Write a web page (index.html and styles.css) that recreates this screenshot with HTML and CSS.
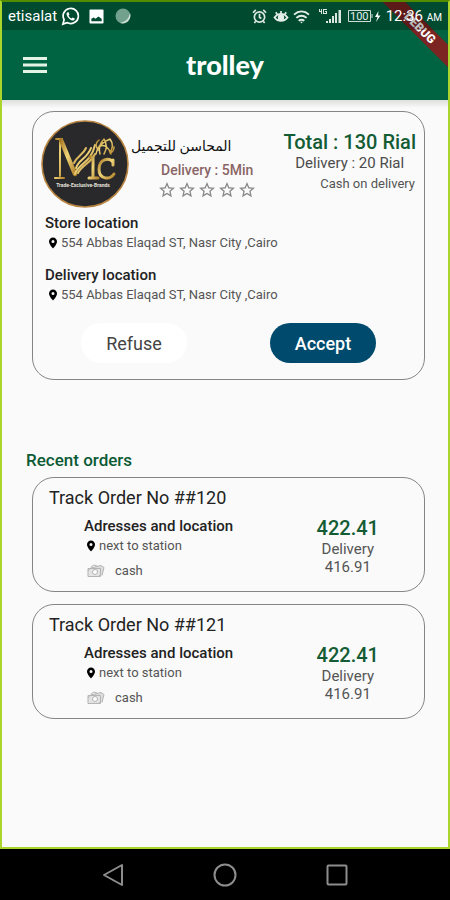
FILE: index.html
```html
<!DOCTYPE html>
<html lang="en">
<head>
<meta charset="utf-8">
<meta name="viewport" content="width=device-width, initial-scale=1">
<title>trolley</title>
<link rel="stylesheet" href="styles.css">
</head>
<body>
<svg class="sprite" aria-hidden="true">
  <symbol id="pin" viewBox="0 0 24 24"><path d="M12 1C7.500 1 4 4.500 4 9c0 6 8 14 8 14s8-8 8-14c0-4.500-3.500-8-8-8zm0 11a3 3 0 1 1 0-6 3 3 0 0 1 0 6z"/></symbol>
  <symbol id="star" viewBox="2 2 20 20"><path d="M22 9.240l-7.190-.62L12 2 9.190 8.630 2 9.240l5.460 4.730L5.820 21 12 17.270 18.180 21l-1.630-7.030L22 9.240zM12 15.400l-3.760 2.270 1-4.280-3.320-2.880 4.380-.38L12 6.100l1.710 4.040 4.380.38-3.320 2.880 1 4.280L12 15.400z"/></symbol>
  <symbol id="cash" viewBox="0 0 18 14"><g fill="none" stroke="#b4b4b4"><path fill="#ddd" d="M3.500 4L14 1.500l3 2-2 8"/><path fill="#e4e4e4" d="M1 4.500h12.500v8H1z"/><circle cx="8" cy="8" r="2.500" fill="#fff"/><path d="M1 7l2-2.500M11.500 12.500l2-2M4 3l3-2 3 1"/></g></symbol>
</svg>
<div class="app">
  <header class="top">
    <div class="status">
      <span class="carrier">etisalat</span>
      <svg class="whatsapp" viewBox="0 0 20 20"><path d="M2 18l1.300-4.600a8 8 0 1 1 3 3z" fill="none" stroke="#fff" stroke-width="1.800"/><path d="M7 5.500c-1.500.5-1.500 2.500-.3 4.500 1.500 2.500 4 4.500 6 4.200 1.500-.2 2-1.500 1.700-2.200l-2.200-1-1.200 1.200C9.500 11.500 8.500 10.500 8 9l.9-1.200L8 5.500z" fill="#fff"/></svg>
      <svg class="image-icon" viewBox="0 0 16 16"><rect x=".5" y=".5" width="15" height="15" rx="1" fill="#fff"/><path d="M2.500 13v-2.500L5 9l2 1.500L10 8l3.500 2.500V13z" fill="#004a31"/></svg>
      <svg class="ball" viewBox="0 0 16 16"><circle cx="8" cy="8" r="7.500" fill="#72a18d"/><path d="M15 5a8 8 0 0 1-10 10c5-1 9-4 10-10z" fill="#d3e0da"/></svg>
      <div class="system">
        <svg class="alarm" viewBox="0 0 16 16" fill="none" stroke="#dbe8e2" stroke-width="1.800"><circle cx="8" cy="8.500" r="5.500"/><path d="M8 5v4l2 1M1 4l3-3M15 4l-3-3M4 13l-1.500 2M12 13l1.500 2"/></svg>
        <svg class="eye" viewBox="0 0 16 16" fill="none" stroke="#e4eee9" stroke-width="1.800"><path d="M1 9c4-5 10-5 14 0-4 5-10 5-14 0zM8 5V2M4 6L2.500 3.500M12 6l1.500-2.500"/><circle cx="8" cy="9" r="2.500" fill="#e4eee9"/></svg>
        <svg class="wifi" viewBox="0 0 18 16" fill="none" stroke="#e4eee9" stroke-width="2"><path d="M1 6c5-4.500 11-4.500 16 0M3.500 9.500c3.500-3 7.500-3 11 0M6 12.500c2-1.500 4-1.500 6 0"/><path d="M7.500 13.500h3L9 15.500z" fill="#e4eee9" stroke="none"/></svg>
        <svg class="signal" viewBox="0 0 24 16" fill="#dbe8e2"><path d="M1 1h1v2h1V1h1v5H3V4H1zM5 1h4v1H6v3h2V4H7V3h2v3H5zM8 13h2v2H8zM11 11h2v4h-2zM14 8h2v7h-2zM17 5h2v10h-2zM20.500 2h2.500v13h-2.500z"/></svg>
        <svg class="battery" viewBox="0 0 34 16"><path d="M.5 2.500h22v11H.5zM24 6v4" fill="none" stroke="#cfdfd8"/><text x="2" y="12" class="charge">100</text><path d="M30.500 3L27 9h2.500L28 14l4.500-6.500H30z" fill="#fff"/></svg>
        <span class="time">12:36 <small>AM</small></span>
      </div>
    </div>
    <div class="bar">
      <button class="menu" aria-label="Menu"><svg viewBox="0 0 24 16" fill="#e3f3e6"><rect width="24" height="3"/><rect y="6.500" width="24" height="3"/><rect y="13" width="24" height="3"/></svg></button>
      <h1 class="brand">trolley</h1>
    </div>
    <div class="ribbon"><span>DEBUG</span></div>
  </header>
  <main class="content">
    <section class="card request">
      <div class="summary">
        <svg class="logo" viewBox="0 0 88 88" role="img" aria-label="Trade Exclusive Brands">
          <defs><linearGradient id="gold" x1="0" y1="0" x2="1" y2="1"><stop offset="0" stop-color="#a97a25"/><stop offset=".45" stop-color="#f0d478"/><stop offset="1" stop-color="#b4842d"/></linearGradient></defs>
          <circle cx="44" cy="44" r="43" fill="#29292b" stroke="#b98542" stroke-width="1.600"/>
          <g fill="none" stroke="url(#gold)" stroke-linecap="round" stroke-linejoin="round">
            <path d="M15 19h6M19 19v37M14 58h9" stroke-width="2"/>
            <path d="M20 20l14 34" stroke-width="4.500"/>
            <path d="M34 54C38 43 50 43 54 25M35 48c3-9 11-9 15-20M33 43c3-7 9-8 12-15M37 53c4-8 13-10 17-19" stroke-width="2"/>
            <path d="M52 38v18M48 58h9M49 37h3" stroke-width="3"/>
            <path d="M72 42c-4-5-14-3-14 7 0 11 11 11 15 5M72 40v5" stroke-width="3"/>
            <path d="M55 34c1-6 6-12 14-15 3 4 3 9 0 14 3-1 4-3 4-6M59 34c-2-7 1-12 4-15 3 5 3 10 0 15M59 26c5-2 9 2 11 8M57 30c-3-4-2-8 1-10" stroke-width="1.500"/>
          </g>
          <text x="42" y="67" class="tagline">Trade-Exclusive-Brands</text>
        </svg>
        <div class="store">
          <p class="name" lang="ar" dir="rtl">المحاسن للتجميل</p>
          <p class="eta">Delivery : 5Min</p>
          <div class="stars" role="img" aria-label="0 of 5 stars">
            <svg><use href="#star"/></svg><svg><use href="#star"/></svg><svg><use href="#star"/></svg><svg><use href="#star"/></svg><svg><use href="#star"/></svg>
          </div>
        </div>
        <div class="price">
          <p class="total">Total : 130 Rial</p>
          <p class="fee">Delivery : 20 Rial</p>
          <p class="method">Cash on delivery</p>
        </div>
      </div>
      <div class="place">
        <h2>Store location</h2>
        <p><svg class="pin"><use href="#pin"/></svg>554 Abbas Elaqad ST, Nasr City ,Cairo</p>
      </div>
      <div class="place">
        <h2>Delivery location</h2>
        <p><svg class="pin"><use href="#pin"/></svg>554 Abbas Elaqad ST, Nasr City ,Cairo</p>
      </div>
      <div class="actions">
        <button class="pill refuse">Refuse</button>
        <button class="pill accept">Accept</button>
      </div>
    </section>
    <h2 class="heading">Recent orders</h2>
    <article class="card order">
      <h3>Track Order No ##120</h3>
      <div class="details">
        <div class="where">
          <h4>Adresses and location</h4>
          <p class="address"><svg class="pin"><use href="#pin"/></svg>next to station</p>
          <p class="payment"><svg class="cash"><use href="#cash"/></svg>cash</p>
        </div>
        <div class="amounts"><strong>422.41</strong><span>Delivery</span><span>416.91</span></div>
      </div>
    </article>
    <article class="card order">
      <h3>Track Order No ##121</h3>
      <div class="details">
        <div class="where">
          <h4>Adresses and location</h4>
          <p class="address"><svg class="pin"><use href="#pin"/></svg>next to station</p>
          <p class="payment"><svg class="cash"><use href="#cash"/></svg>cash</p>
        </div>
        <div class="amounts"><strong>422.41</strong><span>Delivery</span><span>416.91</span></div>
      </div>
    </article>
  </main>
</div>
<nav class="keys">
  <button aria-label="Back"><svg viewBox="0 0 24 24"><path d="M21 2v20L3 12z"/></svg></button>
  <button aria-label="Home"><svg viewBox="0 0 24 24"><circle cx="12" cy="12" r="10.500"/></svg></button>
  <button aria-label="Recent apps"><svg viewBox="0 0 24 24"><rect x="2.500" y="2.500" width="19" height="19" rx="1"/></svg></button>
</nav>
</body>
</html>
```
FILE: styles.css
```css
* { box-sizing: border-box; }
body {
  margin: 0;
  min-height: 100vh;
  display: flex;
  flex-direction: column;
  background: #fafafa;
  color: #222;
  font-family: Roboto, "DejaVu Sans", sans-serif;
}
h1, h2, h3, h4, p { margin: 0; font-weight: 500; }
button { border: 0; padding: 0; background: none; font: inherit; }
svg { display: block; flex: none; }
.sprite { position: absolute; width: 0; height: 0; }

.app {
  flex: 1;
  border: 2px solid #a9d52c;
  border-top-color: #548c00;
}
.top {
  position: relative;
  overflow: hidden;
  background: #006442;
  color: #fff;
}
.status {
  position: relative;
  z-index: 1;
  display: flex;
  align-items: center;
  height: 28px;
  padding: 0 6px;
  background: rgba(0, 0, 0, 0.26);
}
.carrier { font-size: 15px; }
.whatsapp { width: 19px; height: 19px; margin-left: 4px; }
.image-icon { width: 15px; height: 15px; margin-left: 9px; }
.ball { width: 16px; height: 16px; margin-left: 11px; }
.system { display: flex; align-items: center; margin-left: auto; }
.alarm { width: 15px; height: 15px; margin-right: 6px; }
.eye { width: 16px; height: 15px; margin-right: 4px; }
.wifi { width: 17px; height: 15px; margin-right: 8px; }
.signal { width: 24px; height: 16px; margin-right: 6px; }
.battery { width: 34px; height: 16px; margin-right: 4px; }
.charge { font-size: 11px; fill: #e4eee9; }
.time { font-size: 15px; white-space: nowrap; }
.time small { font-size: 10px; }
.bar {
  display: grid;
  grid-template-columns: 43px 1fr 64px;
  align-items: center;
  height: 70px;
  padding-left: 21px;
}
.menu svg { width: 24px; height: 16px; }
.brand {
  text-align: center;
  font-family: Lato, sans-serif;
  font-size: 27px;
  line-height: 32px;
  font-weight: 900;
}
.ribbon {
  position: absolute;
  top: 18px;
  right: -42px;
  width: 140px;
  transform: rotate(45deg);
  background: #7c2421;
  text-align: center;
  font-size: 12px;
  line-height: 16px;
  font-weight: 900;
}

.content {
  padding: 11px 23px 24px 30px;
  background: linear-gradient(#dededc, #fafafa 8px);
}
.card { border: 1px solid #858585; border-radius: 22px; }
.request { padding: 8px 8px 16px; }
.summary { display: flex; height: 93px; }
.logo { width: 88px; height: 88px; }
.tagline { font: 700 5px Roboto, sans-serif; fill: #e5e2db; text-anchor: middle; }
.store { margin-left: 2px; padding-top: 14px; }
.name { font-size: 14px; line-height: 24px; text-align: left; font-weight: 400; color: #111; }
.eta { margin-left: 30px; font-size: 14px; line-height: 24px; color: #8a6565; }
.stars { display: flex; gap: 4px; margin-left: 28px; }
.stars svg { width: 16px; height: 16px; fill: #888; }
.price { margin-left: auto; padding-top: 11px; text-align: center; white-space: nowrap; }
.total { font-size: 20px; line-height: 22px; color: #145c34; }
.fee { font-size: 15px; line-height: 20px; color: #4c4c4c; font-weight: 400; }
.method { padding-right: 1px; font-size: 13px; line-height: 22px; color: #555; font-weight: 400; text-align: right; }
.place { padding-left: 4px; margin-bottom: 12px; }
.place h2 { font-size: 15px; line-height: 20px; }
.place p, .address, .payment { display: flex; align-items: center; color: #555; font-weight: 400; }
.place p { font-size: 13px; line-height: 20px; padding-left: 2px; }
.pin { width: 12px; height: 14px; margin-right: 2px; fill: #000; }
.actions { display: flex; justify-content: space-between; padding: 6px 40px 0; }
.pill { width: 106px; height: 40px; border-radius: 20px; font-size: 18px; }
.refuse { background: #fff; color: #444; }
.accept { background: #004b6d; color: #fff; font-weight: 500; }

.heading { margin: 70px 0 7px -6px; font-size: 17px; line-height: 20px; color: #0b5a35; }
.order { height: 115px; padding: 10px 16px; }
.order + .order { margin-top: 12px; }
.order h3 { font-size: 18px; line-height: 20px; font-weight: 400; }
.details { display: flex; justify-content: space-between; padding: 8px 29px 0 35px; }
.where h4 { font-size: 15px; line-height: 20px; }
.address { font-size: 13px; line-height: 20px; padding-left: 1px; }
.payment { gap: 10px; margin-top: 5px; padding-left: 3px; font-size: 13px; line-height: 20px; }
.cash { width: 18px; height: 14px; }
.amounts { display: flex; flex-direction: column; align-items: center; color: #555; font-size: 15px; line-height: 18px; }
.amounts strong { font-size: 20px; line-height: 24px; font-weight: 500; color: #145c34; }

.keys { display: flex; justify-content: space-between; align-items: center; height: 51px; padding: 0 22.500%; background: #000; }
.keys svg { width: 24px; height: 24px; fill: none; stroke: #8d8d8d; stroke-width: 2; stroke-linejoin: round; }
```
